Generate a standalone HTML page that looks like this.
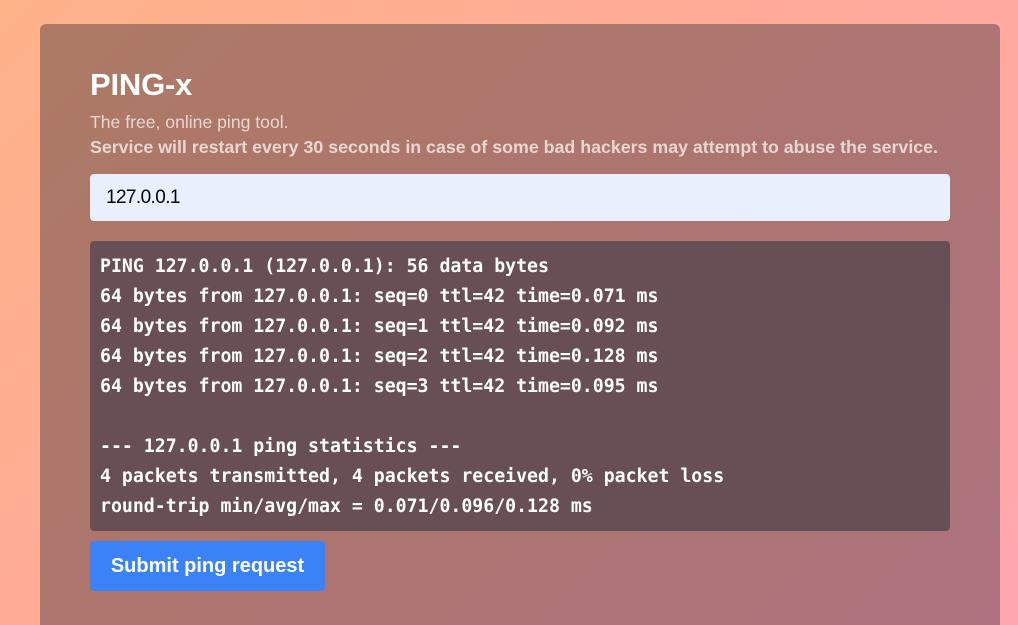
<!DOCTYPE html>
<html><head><meta charset="utf-8"><style>
html,body{margin:0;padding:0;width:1018px;height:625px;overflow:hidden}
body{background:linear-gradient(135deg,#ffb389 0%,#ffaa9a 50%,#ffa7b0 100%);font-family:"Liberation Sans",sans-serif;position:relative}
.card{position:absolute;left:40px;top:24px;width:960px;height:601px;border-radius:6px 6px 0 0;background:linear-gradient(135deg,#ad7a65 0%,#ad7570 50%,#ad7380 100%)}
h1{position:absolute;left:50px;top:43px;margin:0;font-size:31px;font-weight:bold;color:#fff;letter-spacing:-0.2px}
.p1{position:absolute;left:50px;top:88px;font-size:17.6px;color:#ead6d0;margin:0}
.p2{position:absolute;left:50px;top:113px;font-size:17.8px;font-weight:bold;color:#ead6d0;margin:0}
.inp{position:absolute;left:50px;top:150px;width:860px;height:47px;background:#e8f0fe;border-radius:4px;font-size:19px;color:#000;line-height:47px;box-sizing:border-box;padding-left:16px;letter-spacing:-0.6px}
pre{position:absolute;left:50px;top:217px;width:860px;height:290px;margin:0;box-sizing:border-box;background:#684f56;border-radius:4px;color:#fff;font-family:"DejaVu Sans Mono",monospace;font-size:18.2px;line-height:30px;padding:11px 10px;font-weight:bold}
.btn{position:absolute;left:50px;top:517px;width:235px;height:50px;background:#3b82f6;border-radius:4px;color:#fff;font-size:20px;font-weight:bold;line-height:50px;text-align:center}
</style></head><body>
<div class="card">
<h1>PING-x</h1>
<p class="p1">The free, online ping tool.</p>
<p class="p2">Service will restart every 30 seconds in case of some bad hackers may attempt to abuse the service.</p>
<div class="inp">127.0.0.1</div>
<pre>PING 127.0.0.1 (127.0.0.1): 56 data bytes
64 bytes from 127.0.0.1: seq=0 ttl=42 time=0.071 ms
64 bytes from 127.0.0.1: seq=1 ttl=42 time=0.092 ms
64 bytes from 127.0.0.1: seq=2 ttl=42 time=0.128 ms
64 bytes from 127.0.0.1: seq=3 ttl=42 time=0.095 ms

--- 127.0.0.1 ping statistics ---
4 packets transmitted, 4 packets received, 0% packet loss
round-trip min/avg/max = 0.071/0.096/0.128 ms</pre>
<div class="btn">Submit ping request</div>
</div>
</body></html>
